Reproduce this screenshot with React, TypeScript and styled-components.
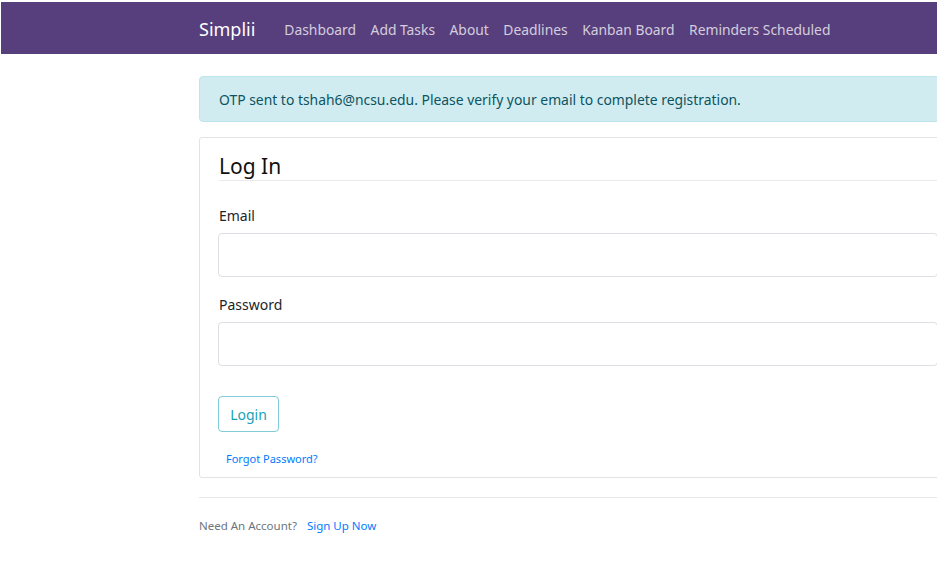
import React from "react";
import styled, { createGlobalStyle } from "styled-components";

const Global = createGlobalStyle`
  html, body { margin: 0; padding: 0; background: #fff; overflow: hidden; }
  body { font-family: "Noto Sans", "Open Sans", sans-serif; }
  * { box-sizing: border-box; }
`;

const Page = styled.div`
  width: 936px;
  margin: 2px 0 0 1px;
  overflow: hidden;
`;

const NavBar = styled.nav`
  height: 52px;
  background: #573e7c;
  display: flex;
  align-items: center;
  padding-left: 198px;
  padding-top: 2px;
`;

const Brand = styled.a`
  color: #fff;
  font-size: 18px;
  margin-right: 29px;
  text-decoration: none;
`;

const NavLink = styled.a`
  color: rgba(255, 255, 255, 0.75);
  font-size: 13.85px;
  margin-right: 14.5px;
  text-decoration: none;
`;

const Container = styled.main`
  width: 760px;
  margin-left: 198px;
  padding-top: 22px;
`;

const Alert = styled.div`
  background: #d1ecf1;
  border: 1px solid #bee5eb;
  border-radius: 4px;
  color: #0c5460;
  font-size: 13.9px;
  height: 46px;
  display: flex;
  align-items: center;
  padding-left: 19px;
`;

const Card = styled.section`
  margin-top: 15px;
  border: 1px solid #e3e3e3;
  border-radius: 3px;
  padding: 14px 19px 10px 19px;
`;

const Title = styled.h2`
  margin: 0;
  font-weight: 400;
  font-size: 21px;
  line-height: 28px;
  color: #111;
  border-bottom: 1px solid #eaeaea;
`;

const Field = styled.div<{ $first?: boolean }>`
  margin-top: ${(p) => (p.$first ? "25px" : "18px")};
`;

const Label = styled.label`
  display: block;
  font-size: 14px;
  line-height: 20px;
  color: #212529;
  margin-bottom: 7px;
`;

const Input = styled.input`
  display: block;
  width: 100%;
  height: 44px;
  border: 1px solid #dcdfe3;
  border-radius: 4px;
  margin-left: -1px;
`;

const LoginButton = styled.button`
  display: block;
  margin-top: 30px;
  margin-left: -1px;
  height: 36px;
  width: 61px;
  background: #fff;
  border: 1px solid #7fcbd8;
  border-radius: 4px;
  color: #17a2b8;
  font-family: inherit;
  font-size: 14px;
  padding: 0;
`;

const Forgot = styled.a`
  display: block;
  margin-top: 19px;
  margin-left: 7px;
  font-size: 11px;
  line-height: 16px;
  color: #007bff;
  text-decoration: none;
`;

const Rule = styled.hr`
  border: 0;
  border-top: 1px solid #e6e6e6;
  margin: 19px 0 0 0;
`;

const Footer = styled.div`
  margin-top: 20px;
  font-size: 11.5px;
  line-height: 16px;
  color: #6c757d;
`;

const SignUp = styled.a`
  color: #007bff;
  margin-left: 10px;
  text-decoration: none;
`;

export default function App() {
  const links = ["Dashboard", "Add Tasks", "About", "Deadlines", "Kanban Board", "Reminders Scheduled"];
  return (
    <Page>
      <Global />
      <NavBar>
        <Brand>Simplii</Brand>
        {links.map((l) => (
          <NavLink key={l}>{l}</NavLink>
        ))}
      </NavBar>
      <Container>
        <Alert>OTP sent to tshah6@ncsu.edu. Please verify your email to complete registration.</Alert>
        <Card>
          <Title>Log In</Title>
          <Field $first>
            <Label>Email</Label>
            <Input type="text" />
          </Field>
          <Field>
            <Label>Password</Label>
            <Input type="password" />
          </Field>
          <LoginButton>Login</LoginButton>
          <Forgot>Forgot Password?</Forgot>
        </Card>
        <Rule />
        <Footer>
          Need An Account?
          <SignUp>Sign Up Now</SignUp>
        </Footer>
      </Container>
    </Page>
  );
}
